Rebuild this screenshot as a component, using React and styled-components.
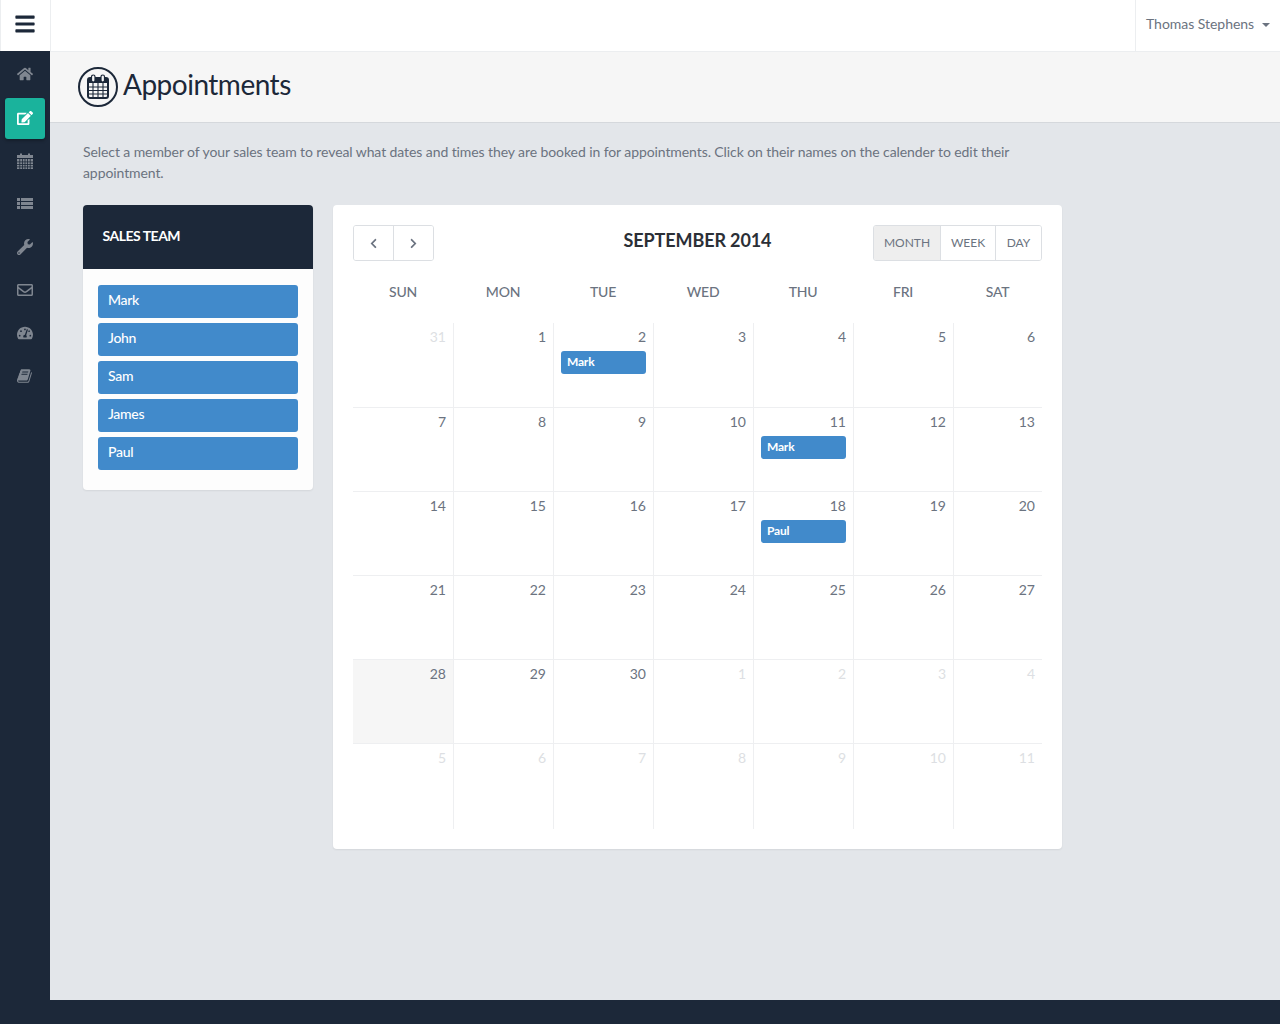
import { createGlobalStyle } from "styled-components";
import styled from "styled-components";
import { FaHome, FaEdit, FaWrench, FaRegEnvelope, FaTachometerAlt, FaBars, FaChevronLeft, FaChevronRight } from "react-icons/fa";

const GlobalStyle = createGlobalStyle`
  html, body { margin: 0; padding: 0; }
  body { font-family: Lato, "Liberation Sans", sans-serif; color: #6b7380; background: #1c2839; }
  * { box-sizing: border-box; }
`
const Page = styled.div`
  width: 1280px;
  height: 1024px;
  display: grid;
  grid-template-columns: 50px 1fr;
  grid-template-rows: 51px 949px 24px;
  overflow: hidden;
`
const BurgerBox = styled.div`
  background: #fff;
  display: flex;
  align-items: center;
  justify-content: center;
  color: #1c2839;
  font-size: 22px;
  border-left: 1px solid #eceef0;
  padding: 0 2px 3px 0;
`
const TopBar = styled.div`
  background: #fff;
  display: flex;
  justify-content: flex-end;
  border-left: 1px solid #eceef0;
`
const UserMenu = styled.div`
  width: 145px;
  border-left: 1px solid #eceef0;
  display: flex;
  align-items: center;
  padding: 0 0 5px 10px;
  font-size: 14px;
  letter-spacing: -0.03px;
  color: #6b7380;
`
const Caret = styled.span`
  margin-left: 8px;
  margin-top: 3px;
  border-top: 4px solid #6b7380;
  border-left: 4px solid transparent;
  border-right: 4px solid transparent;
`
const Sidebar = styled.nav`
  background: #1c2839;
  padding: 4px 5px 0;
  display: flex;
  flex-direction: column;
  gap: 2px;
`
const NavItem = styled.div`
  height: 41px;
  border-radius: 3px;
  display: flex;
  align-items: center;
  justify-content: center;
  padding-bottom: ${props => props.$first ? "4px" : "2px"};
  color: ${props => props.$active ? "#fff" : "#7f8690"};
  background: ${props => props.$active ? "#1ab39c" : "transparent"};
  box-shadow: ${props => props.$active ? "0 2px 3px rgba(0,0,0,0.25)" : "none"};
`
const Main = styled.main`
  background: #e3e6ea;
  border-top: 1px solid #eceef0;
  display: flex;
  flex-direction: column;
`
const TitleBar = styled.header`
  height: 71px;
  background: #f6f6f6;
  border-bottom: 1px solid #d5d8dc;
  display: flex;
  align-items: center;
  gap: 5px;
  padding: 0 0 1px 28px;
`
const TitleIcon = styled.span`
  width: 40px;
  height: 40px;
  border: 2px solid #1c2839;
  border-radius: 50%;
  display: flex;
  align-items: center;
  justify-content: center;
`
const Title = styled.h1`
  margin: 0;
  padding-bottom: 6px;
  font-size: 28px;
  font-weight: 400;
  letter-spacing: -0.5px;
  color: #1c2839;
  line-height: 40px;
`
const Content = styled.div`
  padding: 18px 33px 0;
`
const Intro = styled.p`
  margin: 0 0 22px;
  width: 979px;
  font-size: 14px;
  line-height: 21px;
  letter-spacing: -0.087px;
  color: #6b7380;
`
const Columns = styled.div`
  display: flex;
  gap: 20px;
  align-items: flex-start;
`
const TeamPanel = styled.section`
  width: 230px;
  background: #fdfdfd;
  border-radius: 4px;
  overflow: hidden;
  box-shadow: 0 1px 2px rgba(0,0,0,0.07);
`
const TeamHeader = styled.h2`
  margin: 0;
  height: 64px;
  background: #1c2839;
  color: #fff;
  font-size: 14px;
  font-weight: 700;
  letter-spacing: -0.5px;
  display: flex;
  align-items: center;
  padding: 0 0 4px 19.5px;
`
const TeamList = styled.div`
  display: flex;
  flex-direction: column;
  gap: 5px;
  padding: 16px 15px 20px;
`
const TeamMember = styled.div`
  height: 33px;
  background: #418acb;
  border-radius: 3px;
  color: #fff;
  font-size: 14px;
  font-weight: 500;
  padding: 6px 10px 0;
  line-height: 17px;
  letter-spacing: -0.3px;
`
const CalendarCard = styled.section`
  width: 729px;
  height: 644px;
  background: #fff;
  border-radius: 4px;
  padding: 20px;
  box-shadow: 0 1px 2px rgba(0,0,0,0.07);
`
const Toolbar = styled.div`
  display: grid;
  grid-template-columns: 1fr auto 1fr;
  align-items: flex-start;
  height: 36px;
`
const ButtonGroup = styled.div`
  display: inline-flex;
  justify-self: ${props => props.$end ? "end" : "start"};
  height: 36px;
  border: 1px solid #dcdfe3;
  border-radius: 3px;
  overflow: hidden;
`
const ToolButton = styled.div`
  display: flex;
  align-items: center;
  justify-content: center;
  width: ${props => props.$w}px;
  padding-bottom: ${props => props.$icon ? "0" : "2px"};
  font-size: ${props => props.$icon ? "11px" : "12px"};
  color: #6b7380;
  background: ${props => props.$active ? "#eeeeee" : "#fff"};
  & + & { border-left: 1px solid #dcdfe3; }
`
const CalendarTitle = styled.h2`
  margin: 0;
  font-size: 18px;
  font-weight: 700;
  letter-spacing: -0.12px;
  color: #2b2f36;
  line-height: 30px;
`
const Grid = styled.div`
  display: grid;
  grid-template-columns: repeat(6, 100px) 89px;
`
const DayName = styled.div`
  height: 62px;
  padding-top: 22px;
  line-height: 17px;
  text-align: center;
  font-size: 14px;
  font-weight: 500;
  letter-spacing: -0.2px;
  color: #6b7380;
`
const Cell = styled.div`
  height: ${props => props.$tall ? "85px" : "84px"};
  padding: 5px 7px 0;
  border-left: ${props => props.$start ? "none" : "1px solid #eeeff1"};
  border-bottom: ${props => props.$bottom ? "none" : "1px solid #eeeff1"};
  background: ${props => props.$today ? "#f6f6f6" : "transparent"};
`
const DayNumber = styled.div`
  text-align: right;
  font-size: 14px;
  line-height: 18px;
  color: ${props => props.$muted ? "#dddfe3" : "#6b7380"};
`
const Event = styled.div`
  height: 23px;
  margin-top: 5px;
  background: #418acb;
  border-radius: 3px;
  color: #fff;
  font-size: 12px;
  font-weight: 700;
  line-height: 21px;
  padding-left: 6px;
  letter-spacing: -0.2px;
`
const Footer = styled.footer`
  grid-column: 1 / 3;
  background: #1c2839;
`

function CalendarGlyph({ size = 16 }) {
  return (
    <svg width={size} height={size} viewBox="0 0 16 16" fill="currentColor">
      <path d="M0 2h3V0.5h2V2h6V0.5h2V2h3v3H0z" />
      <path d="M0 6h16v10H0z" />
      {[2.8, 5.5, 8, 10.5, 13.2].map(x => <rect key={x} x={x - 0.4} y="6" width="0.8" height="10" fill="#1c2839" />)}
      {[8.500, 11, 13.5].map(y => <rect key={y} x="0" y={y} width="16" height="0.8" fill="#1c2839" />)}
    </svg>
  )
}

function ListGlyph({ size = 16 }) {
  return (
    <svg width={size} height={size} viewBox="0 0 16 16" fill="currentColor">
      {[2, 6, 10].map(y => (
        <g key={y}>
          <rect x="0" y={y} width="3" height="3" />
          <rect x="4" y={y} width="12" height="3" />
        </g>
      ))}
    </svg>
  )
}

function BookGlyph({ size = 16 }) {
  return (
    <svg width={size} height={size} viewBox="0 0 1792 1792" fill="currentColor">
      <path d="M1639 478q40 57 18 129l-275 906q-19 64-76.500 107.500t-122.500 43.500h-923q-77 0-148.500-53.500t-99.500-131.500q-24-67-2-127 0-4 3-27t4-37q1-8-3-21.500t-3-19.500q2-11 8-21t16.500-23.500 16.500-23.500q23-38 45-91.500t30-91.500q3-10 .5-30t-.5-28q3-11 17-28t17-23q21-36 42-92t25-90q1-9-2.500-32t.5-28q4-13 22-30.500t22-22.500q19-26 42.500-84.500t27.500-96.500q1-8-3-25.500t-2-26.500q2-8 9-18t18-23 17-21q8-12 16.500-30.500t15-35 16-36 19.500-32 26.500-23.500 36-11.500 47.500 5.500l-1 3q38-9 51-9h761q74 0 114 56t18 130l-274 906q-36 119-71.500 153.500t-128.500 34.500h-869q-27 0-38 15-11 16-1 43 24 70 144 70h923q29 0 56-15.500t35-41.500l300-987q7-22 5-57 38 15 59 43zm-1064 2q-4 13 2 22.500t20 9.500h608q13 0 25.500-9.500t16.500-22.500l21-64q4-13-2-22.500t-20-9.500h-608q-13 0-25.500 9.500t-16.500 22.500zm-83 256q-4 13 2 22.500t20 9.500h608q13 0 25.500-9.500t16.500-22.500l21-64q4-13-2-22.500t-20-9.500h-608q-13 0-25.500 9.500t-16.500 22.500z" />
    </svg>
  )
}

function TitleCalendar() {
  return (
    <svg width="24" height="26" viewBox="0 0 24 26">
      <rect x="2" y="4" width="20" height="20" rx="2" fill="none" stroke="#1c2839" strokeWidth="2" />
      <rect x="2" y="4" width="20" height="5" fill="#1c2839" />
      <rect x="5.5" y="1" width="3.500" height="7" rx="1.7" fill="#f6f6f6" stroke="#1c2839" strokeWidth="1.2" />
      <rect x="15" y="1" width="3.500" height="7" rx="1.7" fill="#f6f6f6" stroke="#1c2839" strokeWidth="1.2" />
      <path d="M2 13h20M2 16.500h20M2 20h20M7 9v14M12 9v14M17 9v14" stroke="#1c2839" strokeWidth="1.100" fill="none" />
    </svg>
  )
}

const navItems = [FaHome, FaEdit, CalendarGlyph, ListGlyph, FaWrench, FaRegEnvelope, FaTachometerAlt, BookGlyph]
const team = ["Mark", "John", "Sam", "James", "Paul"]
const days = ["SUN", "MON", "TUE", "WED", "THU", "FRI", "SAT"]
const events = { 2: "Mark", 11: "Mark", 18: "Paul" }

// 42 cells starting from Aug 31
const cells = Array.from({ length: 42 }, (_, i) => {
  if (i === 0) return { n: 31, muted: true }
  if (i <= 30) return { n: i, event: events[i], today: i === 28 }
  return { n: i - 30, muted: true }
})

export default function App() {
  return (
    <Page>
      <GlobalStyle />
      <BurgerBox><FaBars /></BurgerBox>
      <TopBar>
        <UserMenu>Thomas Stephens<Caret /></UserMenu>
      </TopBar>
      <Sidebar>
        {navItems.map((Icon, index) => (
          <NavItem key={index} $first={index === 0} $active={index === 1}><Icon size={16} /></NavItem>
        ))}
      </Sidebar>
      <Main>
        <TitleBar>
          <TitleIcon><TitleCalendar /></TitleIcon>
          <Title>Appointments</Title>
        </TitleBar>
        <Content>
          <Intro>Select a member of your sales team to reveal what dates and times they are booked in for appointments. Click on their names on the calender to edit their appointment.</Intro>
          <Columns>
            <TeamPanel>
              <TeamHeader>SALES TEAM</TeamHeader>
              <TeamList>
                {team.map(name => <TeamMember key={name}>{name}</TeamMember>)}
              </TeamList>
            </TeamPanel>
            <CalendarCard>
              <Toolbar>
                <ButtonGroup>
                  <ToolButton $w={39} $icon><FaChevronLeft /></ToolButton>
                  <ToolButton $w={40} $icon><FaChevronRight /></ToolButton>
                </ButtonGroup>
                <CalendarTitle>SEPTEMBER 2014</CalendarTitle>
                <ButtonGroup $end>
                  <ToolButton $w={66} $active>MONTH</ToolButton>
                  <ToolButton $w={55}>WEEK</ToolButton>
                  <ToolButton $w={46}>DAY</ToolButton>
                </ButtonGroup>
              </Toolbar>
              <Grid>
                {days.map(day => <DayName key={day}>{day}</DayName>)}
                {cells.map((cell, i) => (
                  <Cell key={i} $tall={i < 7 || i >= 35} $start={i % 7 === 0} $bottom={i >= 35} $today={cell.today}>
                    <DayNumber $muted={cell.muted}>{cell.n}</DayNumber>
                    {cell.event && <Event>{cell.event}</Event>}
                  </Cell>
                ))}
              </Grid>
            </CalendarCard>
          </Columns>
        </Content>
      </Main>
      <Footer />
    </Page>
  )
}
